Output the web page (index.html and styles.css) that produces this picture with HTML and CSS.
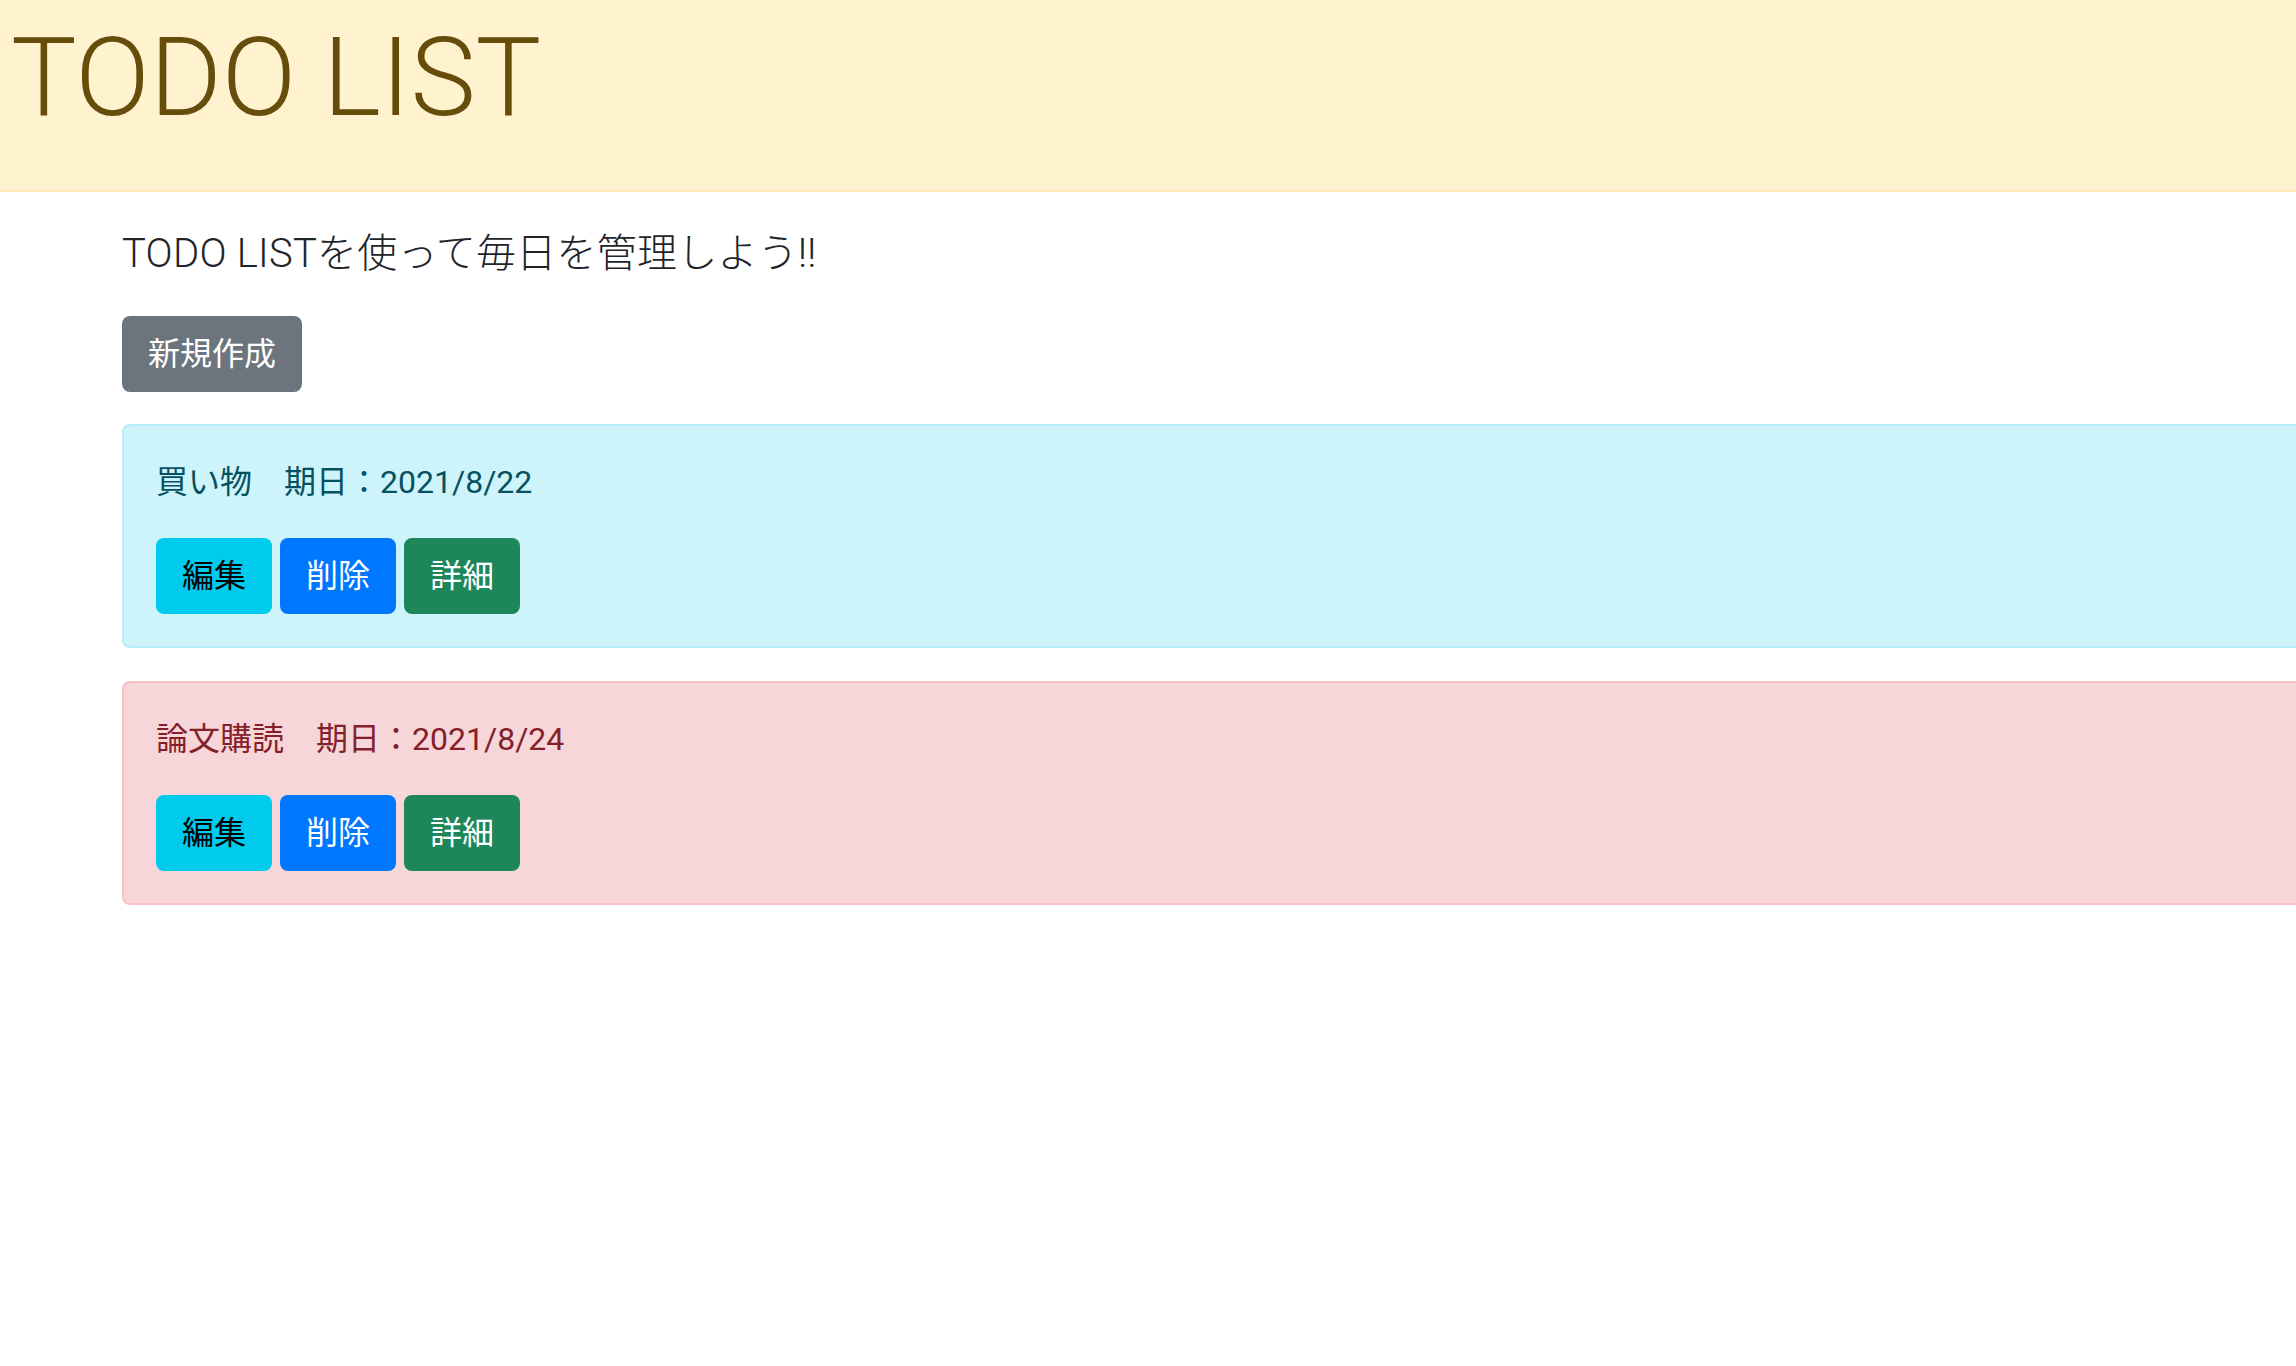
FILE: index.html
```html
<!DOCTYPE html>
<html lang="ja">
<head>
<meta charset="utf-8">
<title>TODO LIST</title>
<link rel="stylesheet" href="styles.css">
</head>
<body>
<header class="header">
  <h1 class="header-title">TODO LIST</h1>
</header>
<main class="content">
  <p class="lead">TODO LISTを使って毎日を管理しよう!!</p>
  <button class="btn btn-secondary btn-new">新規作成</button>
  <div class="alert alert-info">
    <p class="todo-title">買い物　期日：2021/8/22</p>
    <div class="actions">
      <button class="btn btn-info">編集</button>
      <button class="btn btn-primary">削除</button>
      <button class="btn btn-success">詳細</button>
    </div>
  </div>
  <div class="alert alert-danger">
    <p class="todo-title">論文購読　期日：2021/8/24</p>
    <div class="actions">
      <button class="btn btn-info">編集</button>
      <button class="btn btn-primary">削除</button>
      <button class="btn btn-success">詳細</button>
    </div>
  </div>
</main>
</body>
</html>
```

FILE: styles.css
```css
html, body {
  margin: 0;
  padding: 0;
  overflow-x: hidden;
  background: #ffffff;
}

body {
  font-family: "Roboto", "Noto Sans CJK JP", sans-serif;
  color: #212529;
  font-size: 32px;
  line-height: 1.5;
}

.header {
  background: #fff2cf;
  border-bottom: 2px solid #ffe9b8;
  height: 190px;
  padding: 0 0 0 11px;
}

.header-title {
  margin: 0;
  padding-top: 12px;
  font-family: "Roboto", "Liberation Sans", sans-serif;
  font-weight: 300;
  font-size: 110px;
  line-height: 1.2;
  color: #664d0b;
}

.content {
  padding: 0 0 0 122px;
}

.lead {
  margin: 32px 0 32px;
  font-family: "Roboto", "Noto Sans CJK JP", sans-serif;
  font-size: 40px;
  line-height: 1.5;
  font-weight: 300;
  letter-spacing: 0.25px;
  color: #212529;
}

.btn {
  font-family: "Roboto", "Noto Sans CJK JP", sans-serif;
  font-size: 32px;
  line-height: 1.5;
  padding: 12px 24px;
  height: 76px;
  border: 2px solid transparent;
  border-radius: 8px;
  cursor: pointer;
}

.btn-new {
  display: block;
  margin-bottom: 32px;
}

.btn-secondary {
  background: #6c757d;
  color: #ffffff;
}

.btn-info {
  background: #00cbed;
  color: #000000;
}

.btn-primary {
  background: #0077ff;
  color: #ffffff;
}

.btn-success {
  background: #1e8759;
  color: #ffffff;
}

.alert {
  border: 2px solid;
  border-right: none;
  border-radius: 8px 0 0 8px;
  padding: 32px;
  margin-bottom: 33px;
}

.alert-info {
  background: #cef4fb;
  border-color: #b6eefa;
  color: #055160;
}

.alert-danger {
  background: #f6d6d9;
  border-color: #f4c1c6;
  color: #842029;
}

.todo-title {
  margin: 0 0 32px;
}

.actions {
  display: flex;
  gap: 8px;
}
```
